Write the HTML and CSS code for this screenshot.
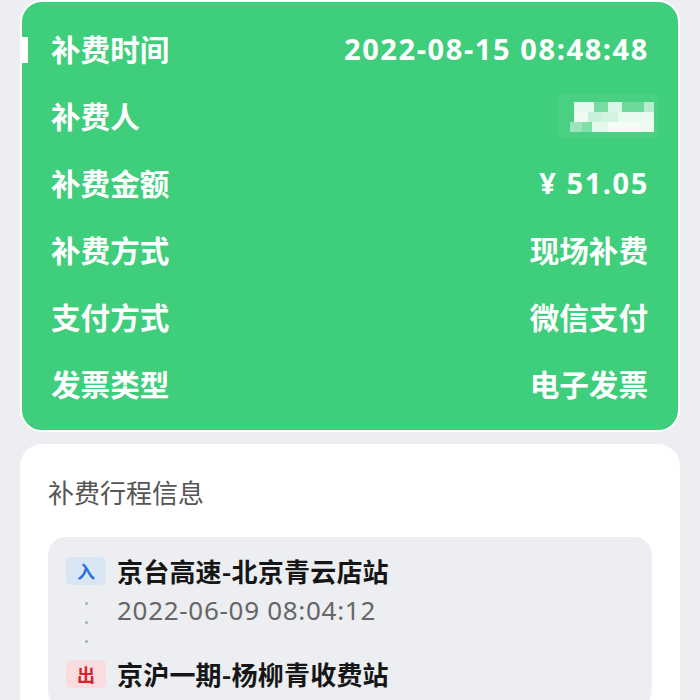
FILE: index.html
```html
<!DOCTYPE html>
<html lang="zh-CN">
<head>
<meta charset="utf-8">
<link rel="stylesheet" href="styles.css">
</head>
<body>
<div class="page">
  <section class="summary">
    <div class="row first">
      <span class="label">补费时间</span>
      <span class="value num">2022-08-15 08:48:48</span>
    </div>
    <div class="row">
      <span class="label">补费人</span>
      <svg class="mosaic" width="100" height="44" viewBox="0 0 100 44">
        <rect x="0" y="0" width="100" height="44" rx="6" fill="#ffffff" fill-opacity="0.06"/>
        <rect x="16" y="8" width="20" height="10" fill="#fff" fill-opacity="0.85"/>
        <rect x="36" y="8" width="14" height="10" fill="#fff" fill-opacity="0.25"/>
        <rect x="50" y="8" width="14" height="10" fill="#fff" fill-opacity="0.8"/>
        <rect x="64" y="8" width="22" height="10" fill="#fff" fill-opacity="0.2"/>
        <rect x="86" y="8" width="10" height="10" fill="#fff" fill-opacity="0.6"/>
        <rect x="16" y="18" width="14" height="10" fill="#fff" fill-opacity="0.9"/>
        <rect x="30" y="18" width="14" height="10" fill="#fff" fill-opacity="0.7"/>
        <rect x="44" y="18" width="16" height="10" fill="#fff" fill-opacity="0.75"/>
        <rect x="60" y="18" width="36" height="10" fill="#fff" fill-opacity="0.88"/>
        <rect x="12" y="28" width="12" height="10" fill="#fff" fill-opacity="0.45"/>
        <rect x="24" y="28" width="10" height="10" fill="#fff" fill-opacity="0.3"/>
        <rect x="34" y="28" width="16" height="10" fill="#fff" fill-opacity="0.85"/>
        <rect x="50" y="28" width="32" height="10" fill="#fff" fill-opacity="0.95"/>
        <rect x="82" y="28" width="14" height="10" fill="#fff" fill-opacity="0.9"/>
      </svg>
    </div>
    <div class="row">
      <span class="label">补费金额</span>
      <span class="value num">¥ 51.05</span>
    </div>
    <div class="row">
      <span class="label">补费方式</span>
      <span class="value">现场补费</span>
    </div>
    <div class="row">
      <span class="label">支付方式</span>
      <span class="value">微信支付</span>
    </div>
    <div class="row">
      <span class="label">发票类型</span>
      <span class="value">电子发票</span>
    </div>
  </section>

  <section class="trip">
    <h2 class="trip-title">补费行程信息</h2>
    <div class="trip-box">
      <div class="stop">
        <span class="badge in">入</span>
        <span class="station">京台高速-北京青云店站</span>
      </div>
      <div class="mid">
        <div class="dots"><i></i><i></i><i></i></div>
        <div class="time">2022-06-09 08:04:12</div>
      </div>
      <div class="stop">
        <span class="badge out">出</span>
        <span class="station">京沪一期-杨柳青收费站</span>
      </div>
    </div>
  </section>
</div>
</body>
</html>
```

FILE: styles.css
```css
html, body {
  margin: 0;
  padding: 0;
  background: #eceef1;
  font-family: "Noto Sans", "Noto Sans CJK SC", sans-serif;
}

.page {
  padding: 0 20px;
  display: flex;
  flex-direction: column;
  gap: 12px;
}

.summary {
  position: relative;
  background: #3fce7b;
  border: 2px solid #ffffff;
  border-radius: 22px;
  padding: 13px 30px 13px 30px;
  color: #ffffff;
}

.row {
  height: 67px;
  display: flex;
  align-items: center;
  justify-content: space-between;
}

.row.first::before {
  content: "";
  position: absolute;
  left: 0;
  top: 35px;
  width: 6px;
  height: 26px;
  background: #ffffff;
}

.label, .value {
  font-family: "Noto Sans CJK SC", sans-serif;
  font-size: 29.6px;
  font-weight: 700;
  line-height: 1;
}

.label {
  margin-left: -1px;
}

.value.num {
  font-family: "Noto Sans", "Noto Sans CJK SC", sans-serif;
  font-size: 29px;
  letter-spacing: 1.6px;
  margin-right: -1px;
}

.mosaic {
  display: block;
  margin-right: -10px;
}

.trip {
  background: #ffffff;
  border-radius: 22px;
  padding: 0 28px 0 28px;
  min-height: 300px;
}

.trip-title {
  margin: 0;
  height: 93px;
  display: flex;
  align-items: center;
  padding-top: 2px;
  box-sizing: border-box;
  font-family: "Noto Sans CJK SC", sans-serif;
  font-size: 26px;
  font-weight: 400;
  color: #555555;
}

.trip-box {
  background: #eceef1;
  border-radius: 18px;
  padding: 20px 18px;
}

.stop {
  display: flex;
  align-items: center;
  gap: 11px;
  height: 28px;
}

.badge {
  width: 40px;
  height: 28px;
  border-radius: 5px;
  display: flex;
  align-items: center;
  justify-content: center;
  font-family: "Noto Sans CJK SC", sans-serif;
  font-size: 18px;
  font-weight: 700;
}

.badge.in {
  background: #d9e6f6;
  color: #2a72d8;
}

.badge.out {
  background: #f8dce0;
  color: #d9222d;
}

.station {
  font-family: "Noto Sans CJK SC", sans-serif;
  font-size: 26px;
  font-weight: 700;
  color: #161616;
  line-height: 1;
  letter-spacing: 0.2px;
}

.mid {
  display: flex;
  gap: 11px;
  height: 75px;
}

.dots {
  width: 40px;
  display: flex;
  flex-direction: column;
  align-items: center;
  padding-top: 17px;
  gap: 16px;
}

.dots i {
  display: block;
  width: 3px;
  height: 3px;
  border-radius: 50%;
  background: #a9adb3;
}

.time {
  margin-top: 10px;
  height: 30px;
  line-height: 30px;
  font-family: "Noto Sans", sans-serif;
  font-size: 26px;
  color: #666666;
  letter-spacing: 0.7px;
}
```
